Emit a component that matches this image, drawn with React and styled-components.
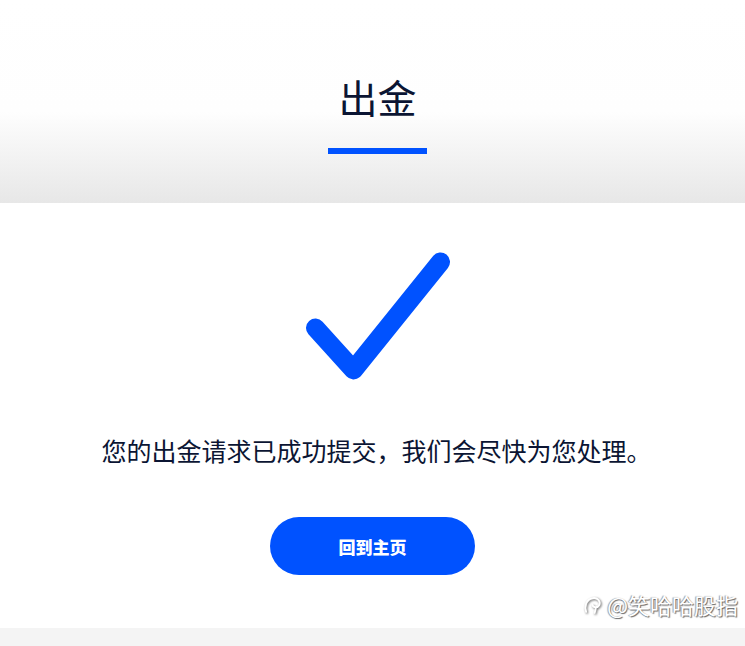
import React from "react"
import styled, { createGlobalStyle } from "styled-components"

const GlobalStyle = createGlobalStyle`
  html, body {
    margin: 0;
    padding: 0;
    background: #fff;
    font-family: "Noto Sans CJK SC", "Noto Sans", sans-serif;
  }
`

const App = () => {
  return (
    <Page>
      <GlobalStyle />
      <Header>
        <Title>出金</Title>
        <Underline />
      </Header>
      <Main>
        <Check width="160" height="140" viewBox="0 0 160 140">
          <polyline
            points="22.5,83 60.5,125 147.5,17"
            fill="none"
            stroke="#0052ff"
            strokeWidth="19"
            strokeLinecap="round"
            strokeLinejoin="round"
          />
        </Check>
        <Message>您的出金请求已成功提交，我们会尽快为您处理。</Message>
        <HomeButton>回到主页</HomeButton>
      </Main>
      <Footer />
      <Watermark>
        <WatermarkIcon viewBox="0 0 20 20">
          <path
            d="M3 17 C1 12 3 5 9 4 C14 3 17 7 15.5 10.5 C14 13.5 9.5 13 9 10.5 M12.5 12.5 L11 18"
            fill="none"
            stroke="#fff"
            strokeWidth="1.8"
            strokeLinecap="round"
          />
        </WatermarkIcon>
        @笑哈哈股指
      </Watermark>
    </Page>
  )
}

export default App

const Page = styled.div`
  position: relative;
  width: 100%;
  min-height: 646px;
  display: flex;
  flex-direction: column;
  background: #fff;
`

const Header = styled.header`
  height: 203px;
  box-sizing: border-box;
  padding: 70px 0 0 10px;
  display: flex;
  flex-direction: column;
  align-items: center;
  background: linear-gradient(to bottom, #fff 0%, #fefefe 55%, #e7e7e7 100%);
`

const Title = styled.h1`
  margin: 0;
  font-size: 39px;
  line-height: 52px;
  font-weight: 400;
  color: #0b1533;
`

const Underline = styled.div`
  margin-top: 26px;
  width: 99px;
  height: 6px;
  background: #0052ff;
`

const Main = styled.main`
  display: flex;
  flex-direction: column;
  align-items: center;
  padding-top: 42px;
  padding-bottom: 53px;
`

const Check = styled.svg`
  display: block;
`

const Message = styled.p`
  margin: 49px 0 0 8px;
  font-size: 25px;
  line-height: 32px;
  color: #0b1533;
`

const HomeButton = styled.button`
  margin-top: 51px;
  width: 205px;
  height: 58px;
  border: none;
  border-radius: 29px;
  background: #0052ff;
  color: #fff;
  font-family: "Noto Sans CJK SC", sans-serif;
  font-size: 17px;
  font-weight: 900;
  cursor: pointer;
`

const Footer = styled.div`
  height: 18px;
  background: #f4f4f4;
`

const Watermark = styled.div`
  position: absolute;
  right: 7px;
  top: 589px;
  display: flex;
  align-items: center;
  gap: 3px;
  font-size: 22px;
  line-height: 30px;
  color: #fff;
  text-shadow: 1px 1px 1px #666, -1px 0 1px #999;
`

const WatermarkIcon = styled.svg`
  width: 21px;
  height: 21px;
  filter: drop-shadow(1px 1px 1px #666);
`
